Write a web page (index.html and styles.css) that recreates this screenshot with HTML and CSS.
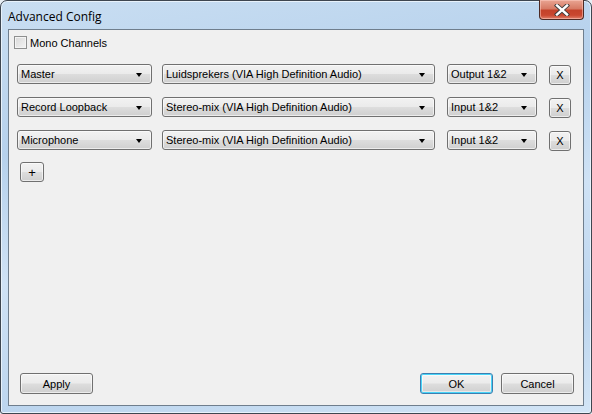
FILE: index.html
```html
<!DOCTYPE html>
<html>
<head>
	<title>Advanced Config</title>
	<meta charset="UTF-8">
	<link rel="stylesheet" href="styles.css">
</head>
<body>
	<div class="window">
		<div class="titlebar">
			<span class="title">Advanced Config</span>
			<div class="close">
				<svg width="20" height="12" viewBox="0 0 20 12">
					<path d="M5 1.5 L15 10.5 M15 1.5 L5 10.5" stroke="#3b3b3b" stroke-width="4.2" stroke-linecap="square"/>
					<path d="M5 1.5 L15 10.5 M15 1.5 L5 10.5" stroke="#fff" stroke-width="2.4" stroke-linecap="square"/>
				</svg>
			</div>
		</div>

		<div class="client">
			<label class="check">
				<span class="box"></span>
				<span>Mono Channels</span>
			</label>

			<div class="rows">
				<div class="row">
					<div class="combo w-name">Master<i class="arrow"></i></div>
					<div class="combo w-dev">Luidsprekers (VIA High Definition Audio)<i class="arrow"></i></div>
					<div class="combo w-ch">Output 1&amp;2<i class="arrow"></i></div>
					<div class="btn btn-x">X</div>
				</div>
				<div class="row">
					<div class="combo w-name">Record Loopback<i class="arrow"></i></div>
					<div class="combo w-dev">Stereo-mix (VIA High Definition Audio)<i class="arrow"></i></div>
					<div class="combo w-ch">Input 1&amp;2<i class="arrow"></i></div>
					<div class="btn btn-x">X</div>
				</div>
				<div class="row">
					<div class="combo w-name">Microphone<i class="arrow"></i></div>
					<div class="combo w-dev">Stereo-mix (VIA High Definition Audio)<i class="arrow"></i></div>
					<div class="combo w-ch">Input 1&amp;2<i class="arrow"></i></div>
					<div class="btn btn-x">X</div>
				</div>
			</div>

			<div class="btn btn-add">+</div>

			<div class="footer">
				<div class="btn btn-wide">Apply</div>
				<div class="spacer"></div>
				<div class="btn btn-wide btn-default">OK</div>
				<div class="btn btn-wide">Cancel</div>
			</div>
		</div>
	</div>
</body>
</html>
```

FILE: styles.css
```css
html, body {
	margin: 0;
	padding: 0;
	background: #e8eef4;
}
body {
	font-family: "Liberation Sans", Arial, sans-serif;
	font-size: 11px;
	color: #000;
}
.window {
	box-sizing: border-box;
	width: 592px;
	height: 414px;
	border: 1px solid #3e4650;
	border-radius: 7px 7px 3px 3px;
	background: linear-gradient(170deg, #c9def2 0%, #b6d1ec 30%, #cfe2f5 55%, #bcd5ee 80%, #d3e5f6 100%);
	display: flex;
	flex-direction: column;
	box-shadow: inset 0 0 0 1px #e8f2fb;
}
.titlebar {
	height: 28px;
	display: flex;
	align-items: center;
	position: relative;
}
.title {
	font-family: "Open Sans", "Liberation Sans", sans-serif;
	font-size: 12px;
	padding-left: 7px;
	padding-top: 2px;
}
.close {
	position: absolute;
	top: -1px;
	right: 7px;
	width: 45px;
	height: 20px;
	box-sizing: border-box;
	border: 1px solid #4d2a24;
	border-top: none;
	border-radius: 0 0 4px 4px;
	background: linear-gradient(#e9a593 0%, #d77b65 45%, #c4422a 55%, #c9472f 80%, #e0806a 100%);
	box-shadow: inset 0 0 0 1px rgba(255, 210, 200, 0.5);
	display: flex;
	align-items: center;
	justify-content: center;
}
.client {
	flex: 1;
	margin: 0 7px 7px;
	border: 1px solid #6f7e8d;
	background: #f0f0f0;
	display: flex;
	flex-direction: column;
	padding: 6px 0 0 5px;
}
.check {
	display: flex;
	align-items: center;
	gap: 3px;
	height: 13px;
}
.box {
	width: 11px;
	height: 11px;
	border: 1px solid #8e8f8f;
	background: linear-gradient(135deg, #d8d8d8, #f4f4f4);
	box-shadow: inset 0 0 0 1px #f4f4f4;
}
.rows {
	display: flex;
	flex-direction: column;
	gap: 13px;
	margin-top: 15px;
	padding-left: 3px;
}
.row {
	display: flex;
	align-items: flex-start;
	height: 20px;
}
.combo, .btn {
	box-sizing: border-box;
	height: 20px;
	border: 1px solid #707070;
	border-radius: 3px;
	background: linear-gradient(#f2f2f2 0%, #ebebeb 48%, #dddddd 52%, #cfcfcf 100%);
	box-shadow: inset 0 0 0 1px rgba(255, 255, 255, 0.6);
}
.combo {
	position: relative;
	line-height: 18px;
	padding-left: 3px;
	white-space: nowrap;
	overflow: hidden;
}
.arrow {
	position: absolute;
	right: 9px;
	top: 8px;
	width: 0;
	height: 0;
	border-left: 3.5px solid transparent;
	border-right: 3.5px solid transparent;
	border-top: 4px solid #000;
}
.w-name { width: 135px; }
.w-dev { width: 273px; margin-left: 10px; }
.w-ch { width: 90px; margin-left: 12px; }
.btn {
	display: flex;
	align-items: center;
	justify-content: center;
}
.btn-x {
	width: 22px;
	margin-left: 12px;
	margin-top: 1px;
}
.btn-add {
	width: 24px;
	margin: 12px 0 0 6px;
	font-size: 13px;
}
.footer {
	margin-top: auto;
	display: flex;
	gap: 8px;
	padding: 0 9px 11px 6px;
}
.spacer {
	flex: 1;
}
.btn-wide {
	width: 73px;
	height: 21px;
}
.btn-default {
	border-color: #3c7fb1;
	box-shadow: inset 0 0 0 1px #48d4f8, inset 0 0 0 2px rgba(255, 255, 255, 0.5);
}
```
